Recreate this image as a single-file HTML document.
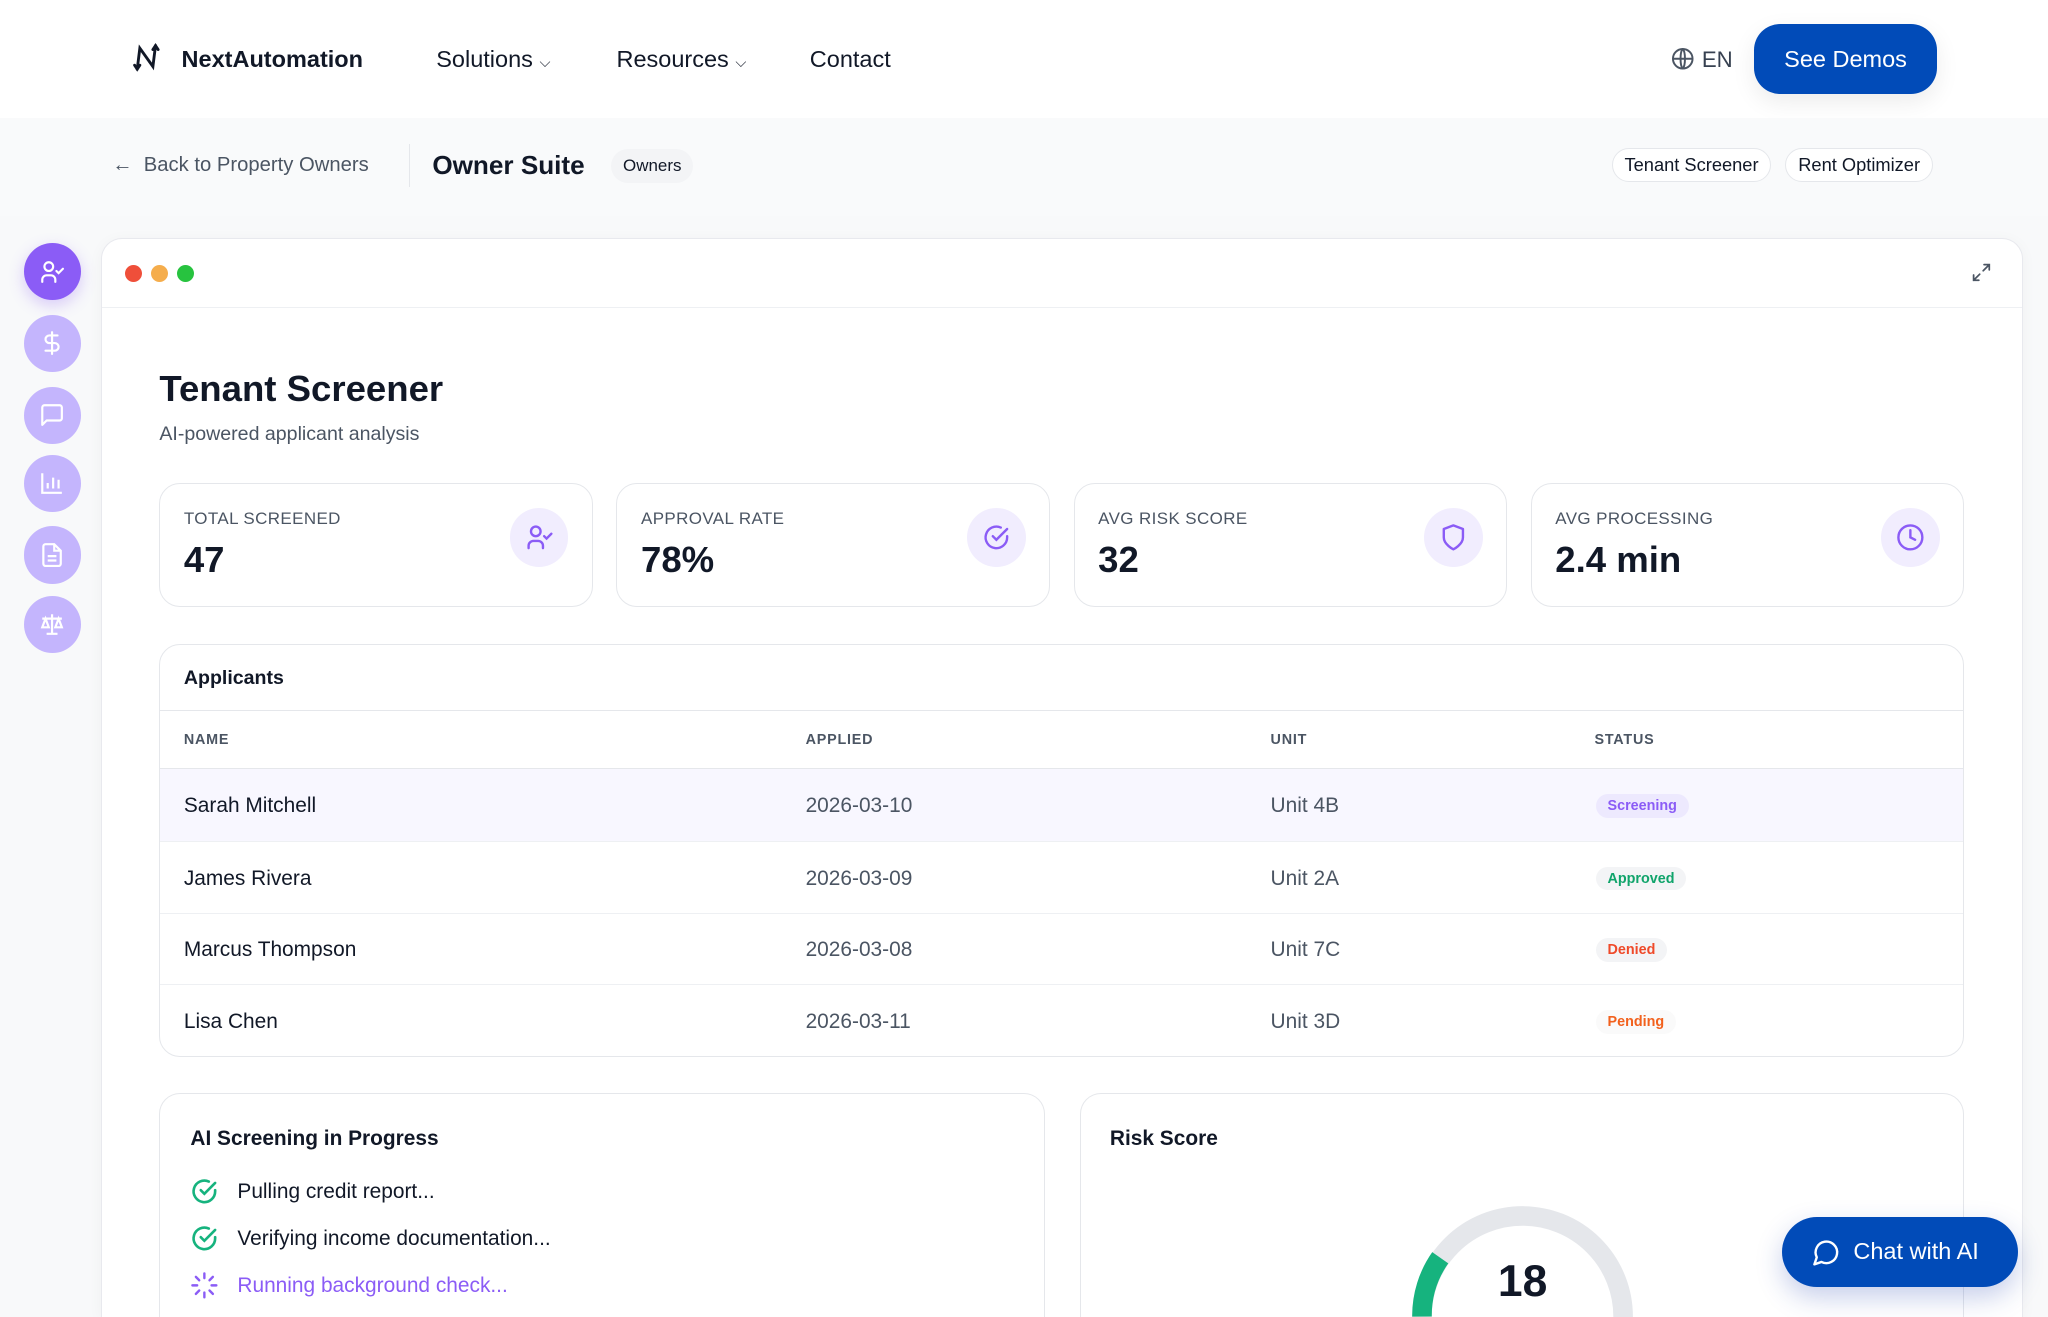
<!DOCTYPE html>
<html><head><meta charset="utf-8"><style>
*{box-sizing:border-box;margin:0;padding:0}
html,body{width:2048px;height:1317px;overflow:hidden;background:#f8f9fa}
#w{zoom:1.306122;width:1568px;height:1008px;position:relative;overflow:hidden;font-family:"Liberation Sans",sans-serif;color:#111827;background:#f8f9fa}
.a{position:absolute}
.nav{left:0;top:0;width:1568px;height:90px;background:#fff}
.nav .t{font-size:18px;top:35px}
.sub{left:0;top:90px;width:1568px;height:75px;background:#f9fafb}
.pill{border:1px solid #e5e7eb;border-radius:14px;background:#fff;font-size:14px;height:26px;line-height:24px;padding:0 9px;top:113px}
.side{width:44px;height:44px;border-radius:50%;background:#c4b5fd;left:18px;display:flex;align-items:center;justify-content:center}
.win{left:77px;top:182px;width:1472px;height:826px;background:#fff;border:1px solid #e8e9ee;border-bottom:none;border-radius:16px 16px 0 0;box-shadow:0 2px 12px rgba(0,0,0,.04)}
.card{border:1px solid #e5e7eb;border-radius:16px;background:#fff}
.stat{top:370px;width:332px;height:95px}
.lbl{position:absolute;left:18px;top:19px;font-size:13px;color:#4b5563;letter-spacing:.3px}
.val{position:absolute;left:18px;top:42px;font-size:28px;font-weight:bold}
.ic{position:absolute;right:18px;top:18px;width:45px;height:45px;border-radius:50%;background:#f1edfe;display:flex;align-items:center;justify-content:center}
.row{position:absolute;left:0;width:1381px;height:55px;border-top:1px solid #eef0f3;font-size:16px}
.row span{position:absolute;top:19px}
.badge{position:absolute;top:19px;left:1099px;font-size:11px;font-weight:bold;padding:3px 9px;border-radius:10px;background:#f3f4f6}
</style></head><body><div id="w">
<div class="a nav">
 <svg class="a" style="left:101px;top:33px" width="22" height="22" viewBox="0 0 22 22" fill="none" stroke="#111827" stroke-width="2.2" stroke-linecap="round"><path d="M4 20 L6 4 L16 18 L18 2"/><path d="M2 17 L4 20 L6 17"/><path d="M16 5 L18 2 L20 5"/></svg>
 <div class="a t" style="left:139px;font-weight:bold">NextAutomation</div>
 <div class="a t" style="left:334px">Solutions <span style="font-size:11px">⌵</span></div>
 <div class="a t" style="left:472px">Resources <span style="font-size:11px">⌵</span></div>
 <div class="a t" style="left:620px">Contact</div>
 <svg class="a" style="left:1279px;top:36px" width="18" height="18" viewBox="0 0 24 24" fill="none" stroke="#4b5563" stroke-width="2"><circle cx="12" cy="12" r="10"/><path d="M2 12h20M12 2c3 3 3 17 0 20M12 2c-3 3-3 17 0 20"/></svg>
 <div class="a t" style="left:1303px;font-size:17px;color:#374151;top:36px">EN</div>
 <div class="a" style="left:1343px;top:18px;width:140px;height:54px;border-radius:20px;background:#014bb8;color:#fff;font-size:18px;text-align:center;line-height:54px;box-shadow:0 6px 18px rgba(0,0,0,.08)">See Demos</div>
</div>
<div class="a sub">
 <div class="a" style="left:86px;top:28px;font-size:15.5px;color:#4b5563">←&nbsp; Back to Property Owners</div>
 <div class="a" style="left:313px;top:20px;width:1px;height:33px;background:#e5e7eb"></div>
 <div class="a" style="left:331px;top:25px;font-size:20px;font-weight:bold">Owner Suite</div>
 <div class="a" style="left:468px;top:24px;height:26px;padding:0 9px;line-height:26px;border-radius:13px;background:#f3f4f6;font-size:13px">Owners</div>
</div>
<div class="a pill" style="left:1234px">Tenant Screener</div>
<div class="a pill" style="left:1367px">Rent Optimizer</div>
<div class="a side" style="top:186px;background:#8b5cf6;box-shadow:0 4px 12px rgba(139,92,246,.3)"><svg width="20" height="20" viewBox="0 0 24 24" fill="none" stroke="#fff" stroke-width="2" stroke-linecap="round"><circle cx="9" cy="7" r="4"/><path d="M3 21v-2a4 4 0 0 1 4-4h4a4 4 0 0 1 4 4v2M16 11l2 2 4-4"/></svg></div>
<div class="a side" style="top:241px"><svg width="20" height="20" viewBox="0 0 24 24" fill="none" stroke="#fff" stroke-width="2" stroke-linecap="round"><path d="M12 2v20M17 5H9.5a3.5 3.5 0 0 0 0 7h5a3.5 3.5 0 0 1 0 7H6"/></svg></div>
<div class="a side" style="top:296px"><svg width="20" height="20" viewBox="0 0 24 24" fill="none" stroke="#fff" stroke-width="2" stroke-linejoin="round"><path d="M21 15a2 2 0 0 1-2 2H7l-4 4V5a2 2 0 0 1 2-2h14a2 2 0 0 1 2 2z"/></svg></div>
<div class="a side" style="top:348px"><svg width="20" height="20" viewBox="0 0 24 24" fill="none" stroke="#fff" stroke-width="2"><path d="M3 3v18h18M8 17v-5M13 17V7M18 17v-8"/></svg></div>
<div class="a side" style="top:403px"><svg width="20" height="20" viewBox="0 0 24 24" fill="none" stroke="#fff" stroke-width="2"><path d="M14 2H6a2 2 0 0 0-2 2v16a2 2 0 0 0 2 2h12a2 2 0 0 0 2-2V8z M14 2v6h6M8 13h8M8 17h8"/></svg></div>
<div class="a side" style="top:456px"><svg width="20" height="20" viewBox="0 0 24 24" fill="none" stroke="#fff" stroke-width="2"><path d="M12 3v18M7 21h10M3 7h18M6 7l-3 8h6zM18 7l-3 8h6z"/></svg></div>
<div class="a win">
 <div class="a" style="left:0;top:52px;width:1470px;height:1px;background:#eef0f3"></div>
 <div class="a" style="left:18px;top:20px;width:13px;height:13px;border-radius:50%;background:#ef4f3a"></div>
 <div class="a" style="left:38px;top:20px;width:13px;height:13px;border-radius:50%;background:#f5ad4c"></div>
 <div class="a" style="left:58px;top:20px;width:13px;height:13px;border-radius:50%;background:#27c33f"></div>
 <svg class="a" style="left:1431px;top:18px" width="16" height="16" viewBox="0 0 24 24" fill="none" stroke="#4b5563" stroke-width="2" stroke-linecap="round"><path d="M15 3h6v6M21 3l-7 7M9 21H3v-6M3 21l7-7"/></svg>
</div>
<div class="a" style="left:122px;top:282px;font-size:28px;font-weight:bold">Tenant Screener</div>
<div class="a" style="left:122px;top:324px;font-size:15px;color:#4b5563">AI-powered applicant analysis</div>
<div class="a card stat" style="left:122px"><div class="lbl">TOTAL SCREENED</div><div class="val">47</div><div class="ic"><svg width="22" height="22" viewBox="0 0 24 24" fill="none" stroke="#8b5cf6" stroke-width="2" stroke-linecap="round"><circle cx="9" cy="7" r="4"/><path d="M3 21v-2a4 4 0 0 1 4-4h4a4 4 0 0 1 4 4v2M16 11l2 2 4-4"/></svg></div></div>
<div class="a card stat" style="left:472px"><div class="lbl">APPROVAL RATE</div><div class="val">78%</div><div class="ic"><svg width="22" height="22" viewBox="0 0 24 24" fill="none" stroke="#8b5cf6" stroke-width="2" stroke-linecap="round"><path d="M21 11v1a9 9 0 1 1-5.3-8.2"/><path d="M9 11l3 3 9-9"/></svg></div></div>
<div class="a card stat" style="left:822px"><div class="lbl">AVG RISK SCORE</div><div class="val">32</div><div class="ic"><svg width="22" height="22" viewBox="0 0 24 24" fill="none" stroke="#8b5cf6" stroke-width="2" stroke-linejoin="round"><path d="M12 22s8-4 8-10V5l-8-3-8 3v7c0 6 8 10 8 10z"/></svg></div></div>
<div class="a card stat" style="left:1172px"><div class="lbl">AVG PROCESSING</div><div class="val">2.4 min</div><div class="ic"><svg width="22" height="22" viewBox="0 0 24 24" fill="none" stroke="#8b5cf6" stroke-width="2" stroke-linecap="round"><circle cx="12" cy="12" r="10"/><path d="M12 6v6l4 2"/></svg></div></div>
<div class="a card" style="left:122px;top:493px;width:1382px;height:316px;overflow:hidden">
 <div class="a" style="left:18px;top:17px;font-size:15px;font-weight:bold">Applicants</div>
 <div class="a" style="left:0;top:50px;width:1382px;height:45px;border-top:1px solid #e5e7eb;border-bottom:1px solid #e5e7eb;font-size:11px;color:#4b5563;letter-spacing:.6px;font-weight:bold">
  <span class="a" style="left:18px;top:16px">NAME</span><span class="a" style="left:494px;top:16px">APPLIED</span><span class="a" style="left:850px;top:16px">UNIT</span><span class="a" style="left:1098px;top:16px">STATUS</span></div>
 <div class="row" style="top:95px;background:#f8f7ff;border-top:none"><span style="left:18px">Sarah Mitchell</span><span style="left:494px;color:#4b5563">2026-03-10</span><span style="left:850px;color:#4b5563">Unit 4B</span><div class="badge" style="color:#8b5cf6;background:#ede9fe">Screening</div></div>
 <div class="row" style="top:150px"><span style="left:18px">James Rivera</span><span style="left:494px;color:#4b5563">2026-03-09</span><span style="left:850px;color:#4b5563">Unit 2A</span><div class="badge" style="color:#10a46b">Approved</div></div>
 <div class="row" style="top:205px"><span style="left:18px">Marcus Thompson</span><span style="left:494px;color:#4b5563">2026-03-08</span><span style="left:850px;color:#4b5563">Unit 7C</span><div class="badge" style="color:#ef4a2a">Denied</div></div>
 <div class="row" style="top:260px"><span style="left:18px">Lisa Chen</span><span style="left:494px;color:#4b5563">2026-03-11</span><span style="left:850px;color:#4b5563">Unit 3D</span><div class="badge" style="color:#f2611d;background:#fafafa">Pending</div></div>
</div>
<div class="a card" style="left:122px;top:837px;width:678px;height:171px;border-bottom:none;border-radius:16px 16px 0 0">
 <div class="a" style="left:23px;top:25px;font-size:16px;font-weight:bold">AI Screening in Progress</div>
 <svg class="a" style="left:23px;top:63px" width="22" height="22" viewBox="0 0 24 24" fill="none" stroke="#16b37e" stroke-width="2.2" stroke-linecap="round"><path d="M21 11v1a9 9 0 1 1-5.3-8.2"/><path d="M9 11l3 3 9-9"/></svg>
 <div class="a" style="left:59px;top:66px;font-size:16px">Pulling credit report...</div>
 <svg class="a" style="left:23px;top:99px" width="22" height="22" viewBox="0 0 24 24" fill="none" stroke="#16b37e" stroke-width="2.2" stroke-linecap="round"><path d="M21 11v1a9 9 0 1 1-5.3-8.2"/><path d="M9 11l3 3 9-9"/></svg>
 <div class="a" style="left:59px;top:102px;font-size:16px">Verifying income documentation...</div>
 <svg class="a" style="left:23px;top:135px" width="22" height="22" viewBox="0 0 24 24" fill="none" stroke="#8b5cf6" stroke-width="2" stroke-linecap="round"><path d="M12 2v4M12 18v4M4.9 4.9l2.8 2.8M16.3 16.3l2.8 2.8M2 12h4M18 12h4M4.9 19.1l2.8-2.8M16.3 7.7l2.8-2.8"/></svg>
 <div class="a" style="left:59px;top:138px;font-size:16px;color:#8b5cf6">Running background check...</div>
</div>
<div class="a card" style="left:827px;top:837px;width:677px;height:171px;overflow:hidden;border-bottom:none;border-radius:16px 16px 0 0">
 <div class="a" style="left:22px;top:25px;font-size:16px;font-weight:bold">Risk Score</div>
 <svg class="a" style="left:248px;top:80px" width="180" height="180" viewBox="0 0 180 180"><circle cx="90" cy="90" r="77" fill="none" stroke="#e5e7eb" stroke-width="15"/><path d="M27 45 A77 77 0 0 0 13 90" fill="none" stroke="#16b37e" stroke-width="15"/></svg>
 <div class="a" style="left:290px;top:125px;width:96px;text-align:center;font-size:34px;font-weight:bold">18</div>
</div>
<div class="a" style="left:1364px;top:932px;width:181px;height:53px;border-radius:27px;background:#014bb8;color:#fff;font-size:18px;line-height:53px;box-shadow:0 8px 20px rgba(30,64,175,.25)">
 <svg class="a" style="left:23px;top:16px" width="22" height="22" viewBox="0 0 24 24" fill="none" stroke="#fff" stroke-width="2" stroke-linejoin="round"><path d="M7.9 20A9 9 0 1 0 4 16.1L2 22z"/></svg>
 <span class="a" style="left:55px;top:0">Chat with AI</span>
</div>
</div></body></html>
